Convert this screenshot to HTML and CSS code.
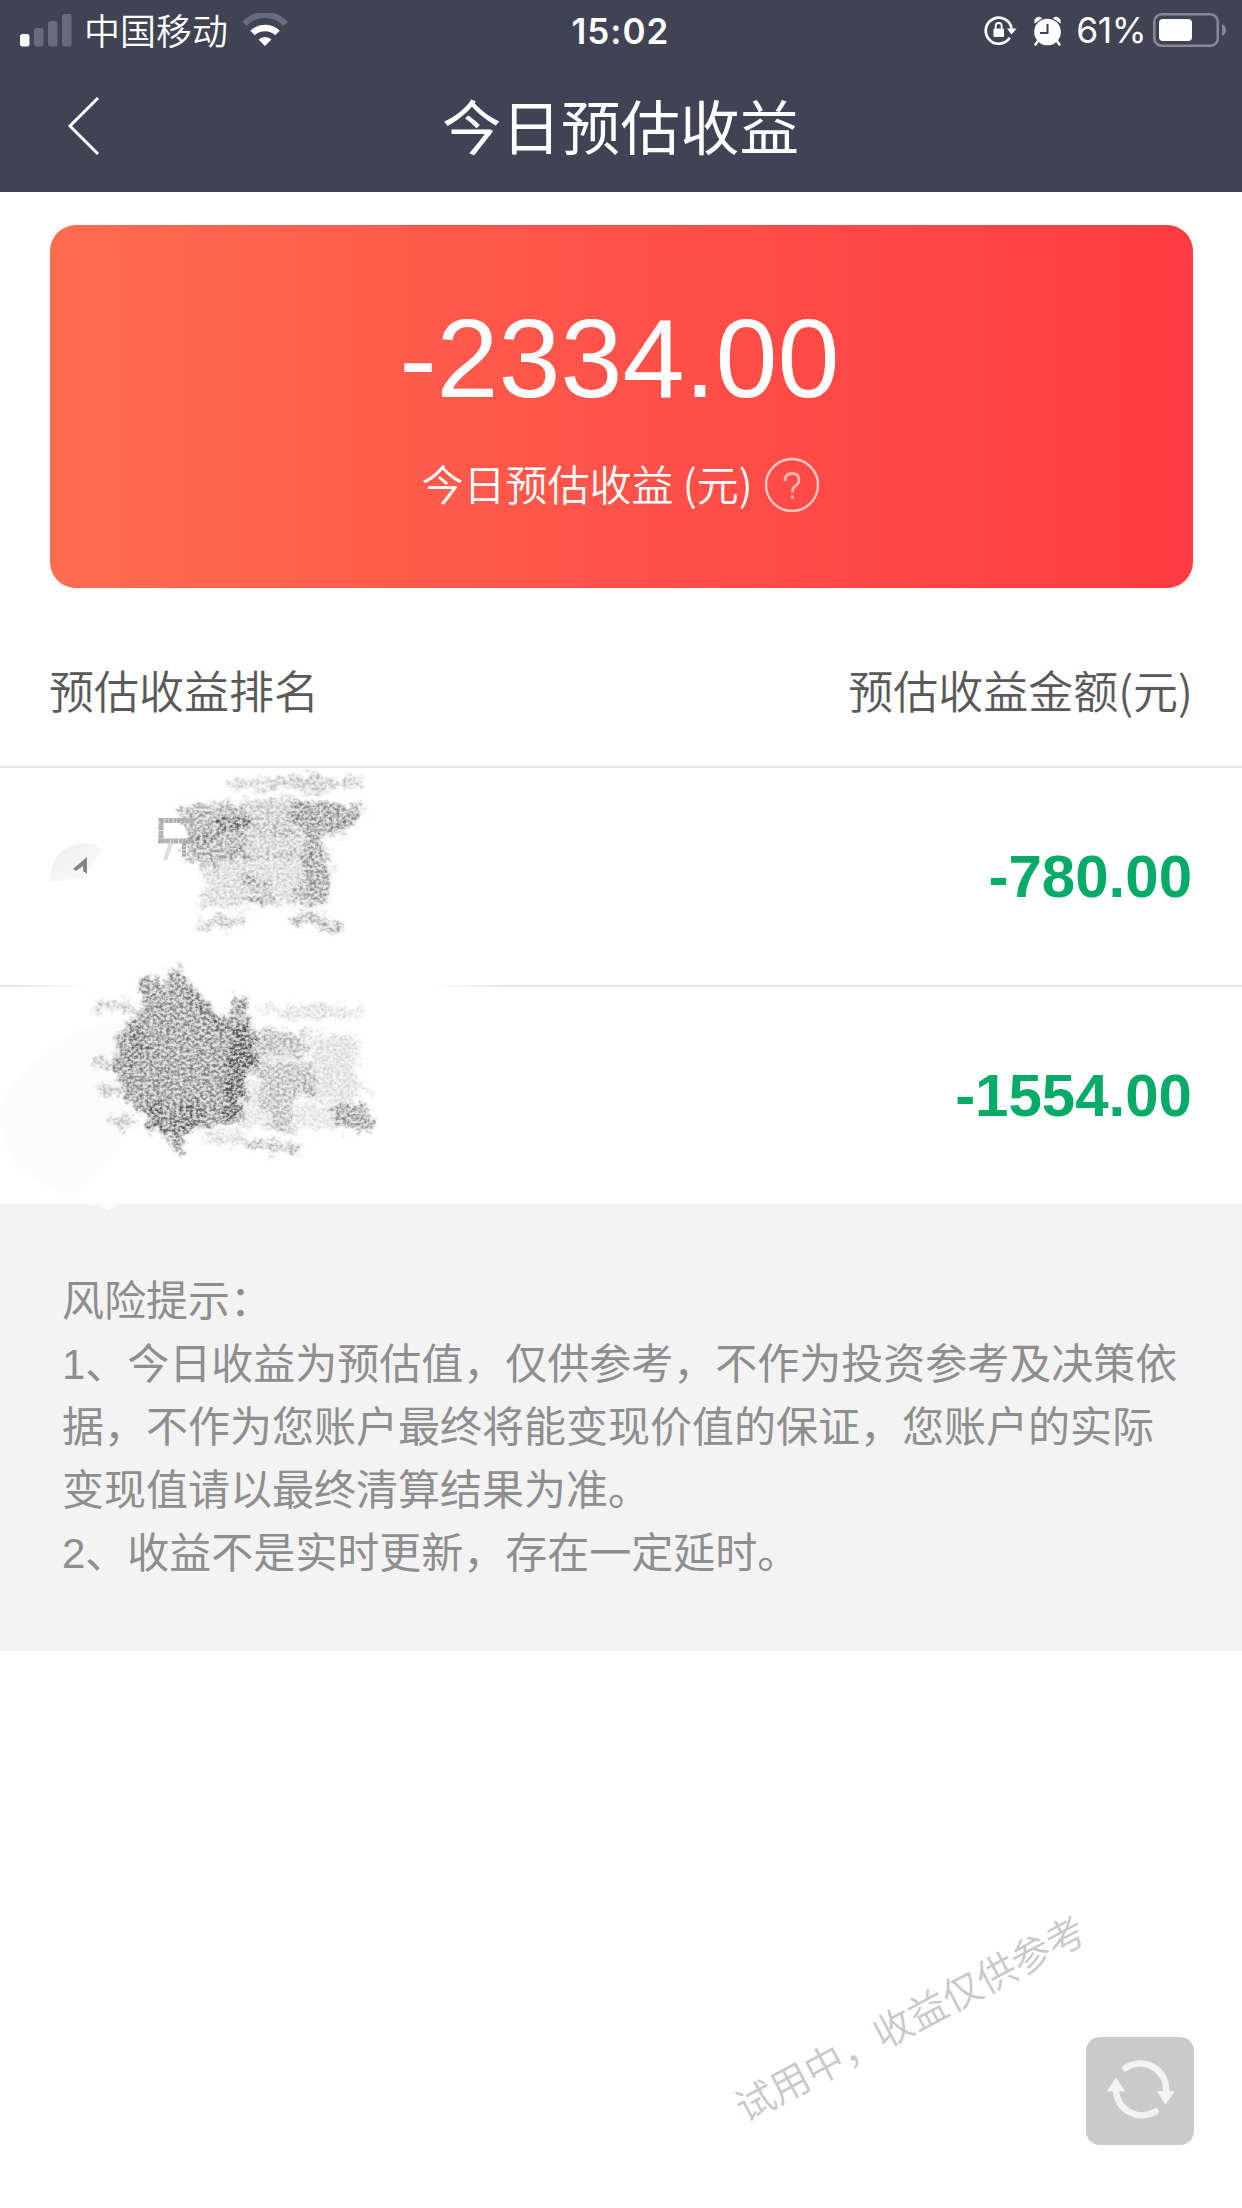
FILE: index.html
```html
<!DOCTYPE html>
<html lang="zh-CN">
<head>
<meta charset="utf-8">
<title>今日预估收益</title>
<link rel="stylesheet" href="styles.css">
</head>
<body>
<header class="top">
  <div class="status">
    <div class="status-left">
      <svg class="signal" viewBox="0 0 52 34" width="52" height="34"><rect x="0" y="20" width="9.500" height="12.500" rx="2.500" fill="#fff"/><g fill="#686b79"><rect x="14" y="14" width="9.500" height="18.500" rx="2.500"/><rect x="28" y="7" width="9.500" height="25.500" rx="2.500"/><rect x="42" y="0" width="9.500" height="32.500" rx="2.500"/></g></svg>
      <span class="carrier">中国移动</span>
      <svg class="wifi" viewBox="0 0 46 34" width="46" height="34" fill="none"><path d="M2.200 10.800A29 29 0 0 1 43.800 10.800" stroke="#686b79" stroke-width="6"/><path d="M10.500 20A18 18 0 0 1 35.500 20" stroke="#fff" stroke-width="6.500"/><path d="M16.500 26.500A9.500 9.500 0 0 1 29.500 26.500L23 33Z" fill="#fff"/></svg>
    </div>
    <span class="time">15:02</span>
    <div class="status-right">
      <svg class="lock" viewBox="0 0 34 32" width="34" height="32"><path d="M25.700 22.800A13 13 0 1 1 27.600 13.500" fill="none" stroke="#fff" stroke-width="2.700"/><path d="M23 13.500H32.500L27.500 19.500Z" fill="#fff"/><rect x="9.500" y="13.500" width="10.500" height="8.500" rx="1" fill="#fff"/><path d="M11.700 14V11a3 3 0 0 1 6 0v3" fill="none" stroke="#fff" stroke-width="1.800"/></svg>
      <svg class="alarm" viewBox="0 0 30 32" width="30" height="32"><circle cx="14.500" cy="17" r="13.300" fill="#fff"/><path d="M5 26L2.500 29.500M24 26l2.500 3.500" stroke="#fff" stroke-width="2.500" stroke-linecap="round"/><path d="M1.500 8.500Q.5 3.500 4.500 2Q7.500 1 9 3.500ZM27.500 8.500Q28.500 3.500 24.500 2Q21.500 1 20 3.500Z" fill="#fff"/><path d="M14.500 9V18H7" fill="none" stroke="#3f4353" stroke-width="2"/></svg>
      <span class="percent">61%</span>
      <svg class="battery" viewBox="0 0 74 36" width="74" height="36"><rect x="1.300" y="1.300" width="63.500" height="31.500" rx="7.500" fill="none" stroke="#868995" stroke-width="2.600"/><rect x="6" y="6" width="33" height="22" rx="4" fill="#fff"/><path d="M69 11Q73 13 73 17T69 23Z" fill="#868995"/></svg>
    </div>
  </div>
  <div class="nav">
    <svg class="back" viewBox="0 0 34 62" width="34" height="62"><path d="M31 3L3 31L31 59" fill="none" stroke="#fff" stroke-width="3"/></svg>
    <h1 class="title">今日预估收益</h1>
  </div>
</header>

<main>
  <section class="card">
    <div class="total">-2334.00</div>
    <div class="caption"><span class="caption-text">今日预估收益 (元)</span><svg class="help" viewBox="0 0 56 56" width="56" height="56"><circle cx="28" cy="28" r="26" fill="none" stroke="#ffc8c4" stroke-width="2.400"/><path d="M21 24Q21 16.500 28 16.500T35 23Q35 26.500 31.500 29T28.500 35.500M28.500 38.500v3" fill="none" stroke="#ffb8b2" stroke-width="2.800"/></svg></div>
  </section>

  <section class="ranking">
    <div class="heading"><span>预估收益排名</span><span>预估收益金额(元)</span></div>
    <div class="rows">
      <div class="row"><span class="amount">-780.00</span></div>
      <div class="row"><span class="amount">-1554.00</span></div>
      <svg class="scribble" viewBox="0 768 520 462" width="520" height="462">
        <defs>
          <filter id="pencil" filterUnits="userSpaceOnUse" x="0" y="768" width="520" height="462" color-interpolation-filters="sRGB">
            <feTurbulence type="fractalNoise" baseFrequency=".09" numOctaves="3" seed="4" result="wave"/>
            <feGaussianBlur in="SourceGraphic" stdDeviation="2.200" result="soft"/>
            <feDisplacementMap in="soft" in2="wave" scale="20" xChannelSelector="R" yChannelSelector="G" result="shape"/>
            <feTurbulence type="fractalNoise" baseFrequency=".3 .34" numOctaves="3" seed="11"/>
            <feColorMatrix values="0 0 0 0 0  0 0 0 0 0  0 0 0 0 0  2.600 0 0 0 -.9" result="grain"/>
            <feComposite in="shape" in2="grain" operator="arithmetic" k1="1.100" k2=".32" k3="0" k4="0"/>
            <feColorMatrix values="0 0 0 0 .34  0 0 0 0 .34  0 0 0 0 .34  0 0 0 1 0"/>
          </filter>
          <linearGradient id="fade"><stop offset="0" stop-color="#fefefe" stop-opacity="0"/><stop offset=".15" stop-color="#fefefe"/><stop offset=".85" stop-color="#fefefe"/><stop offset="1" stop-color="#fefefe" stop-opacity="0"/></linearGradient>
          <linearGradient id="badge" x1="0" y1="0" x2="1" y2="1"><stop offset="0" stop-color="#ededed"/><stop offset="1" stop-color="#fefefe"/></linearGradient>
        </defs>
        <rect x="10" y="983" width="500" height="7" fill="url(#fade)"/>
        <path d="M50 882Q49 848 83 843Q96 843 102 851L84 878Z" fill="url(#badge)"/>
        <path d="M73 869L87 857V874L83 871V866L76 871Z" fill="#858585"/>
        <path d="M78 1030Q20 1065 0 1104Q0 1150 22 1170L70 1200L120 1150V1020Z" fill="#fcfcfc"/>
        <path d="M80 1203L88 1206L98 1204L108 1211L120 1203Z" fill="#fcfcfc"/>
        <g filter="url(#pencil)">
          <path d="M232 782L318 773L333 780L360 777L358 786L325 791L230 787Z" opacity=".28"/>
          <path d="M196 860L330 850L332 880L318 905L197 908L208 890Z" opacity=".2"/>
          <path d="M198 920L245 912L248 925L198 930Z" opacity=".28"/>
          <path d="M238 898L270 894L268 903L238 903Z" opacity=".4"/>
          <path d="M174 807L230 803L244 800L246 828L190 845Z" opacity=".42"/>
          <path d="M244 801L292 798L300 838L246 830Z" opacity=".28"/>
          <path d="M292 800L365 808L345 833L312 836L290 822Z" opacity=".52"/>
          <path d="M190 838L245 828L250 859L198 864L182 853Z" opacity=".42"/>
          <path d="M246 828L296 832L305 858L250 858Z" opacity=".24"/>
          <path d="M302 833L323 836L323 858L304 862Z" opacity=".48"/>
          <path d="M306 862L330 861L326 905L297 899Z" opacity=".38"/>
          <path d="M291 914L317 912L346 930L328 934L310 921L292 924Z" opacity=".42"/>
          <path d="M215 822L252 820L248 829L215 829ZM271 819L281 820L276 824Z" opacity=".65"/>
          <path d="M240 875L268 880L267 888L240 885ZM230 850L242 843L243 855Z" opacity=".38"/>
          <path d="M139 978L151 975L167 990L169 968L181 970L200 997L227 1021L233 994L246 994L247 1030L260 1059L244 1084L243 1127L210 1125L184 1135L180 1153L162 1135L131 1105L115 1075L118 1035L143 1008Z" opacity=".54"/>
          <path d="M231 1027L245 1025L257 1061L246 1080L240 1117H222Z" opacity=".62"/>
          <path d="M183 987L228 1022L218 1031ZM137 1020L125 1068L130 1073L146 1036ZM143 1106L160 1099L172 1127L181 1104L202 1101L199 1127L180 1138L153 1125Z" opacity=".36"/>
          <g fill="none" stroke="#000" stroke-width="9" opacity=".3"><path d="M94 1006H117M121 1006L136 1012M95 1059L117 1068M98 1087L119 1093M110 1120L134 1121M124 1112V1132M170 1130L182 1152"/></g>
          <path d="M249 1006L327 1005L363 1010L361 1017L285 1018Z" opacity=".16"/>
          <path d="M246 1027L307 1034V1056L250 1056Z" opacity=".36"/>
          <path d="M250 1057L314 1063L313 1092L294 1098L295 1135L270 1127L262 1095Z" opacity=".34"/>
          <path d="M245 1080L262 1090L272 1127L245 1127Z" opacity=".14"/>
          <path d="M308 1032L360 1038L354 1070L369 1090L348 1103L295 1098L315 1065Z" opacity=".17"/>
          <path d="M330 1105L364 1105L373 1120L371 1130L338 1129Z" opacity=".5"/>
          <path d="M295 1105L333 1104L338 1128L295 1127Z" opacity=".14"/>
          <path d="M204 1131L245 1134L250 1145L205 1143Z" opacity=".2"/>
          <path d="M245 1140L300 1144L301 1153L245 1148Z" opacity=".36"/>
        </g>
        <path d="M164 825H184L188 838H164Z" fill="#fff"/>
        <path d="M160.500 820.500H194M161 818V843M158 841H192" fill="none" stroke="#b0b0b0" stroke-width="5" stroke-dasharray="4 .7 3 .4"/>
        <path d="M171 843L165 860" stroke="#ddd" stroke-width="4"/>
        <path d="M184 843V857" stroke="#aaa" stroke-width="4" stroke-dasharray="3 .6"/>
      </svg>
    </div>
  </section>

  <section class="notice">
    <p>风险提示：</p>
    <p>1、今日收益为预估值，仅供参考，不作为投资参考及决策依<br>据，不作为您账户最终将能变现价值的保证，您账户的实际<br>变现值请以最终清算结果为准。</p>
    <p>2、收益不是实时更新，存在一定延时。</p>
  </section>
</main>

<div class="watermark">试用中，收益仅供参考</div>
<div class="refresh">
  <svg viewBox="0 0 108 108" width="108" height="108"><g fill="none" stroke="#f3f3f3" stroke-width="6.500" stroke-linecap="round"><path d="M39.500 31A26 26 0 0 1 80 55"/><path d="M69.500 74.500A26 26 0 0 1 30 54"/></g><path d="M71.500 54.500H88L79.500 67ZM21.500 54H38.500L30 41Z" fill="#f3f3f3" stroke="#f3f3f3" stroke-linejoin="round"/></svg>
</div>
</body>
</html>
```
FILE: styles.css
```css
* { box-sizing: border-box; }

body {
  position: relative;
  margin: 0;
  width: 1242px;
  height: 2208px;
  overflow: hidden;
  background: #fefefe;
  color: #595959;
  font-family: "Liberation Sans", "Noto Sans CJK SC", sans-serif;
  font-weight: 350;
}

svg { display: block; flex: none; }

.top {
  height: 192px;
  background: #3f4353;
  color: #fff;
}

.status {
  display: grid;
  grid-template-columns: 1fr auto 1fr;
  align-items: center;
  height: 62px;
  padding: 0 17px 0 20px;
}

.status-left,
.status-right {
  display: flex;
  align-items: center;
}

.status-right { margin-right: -2px; justify-content: flex-end; }

.carrier {
  margin: -3px 0 0 12px;
  font-family: "Noto Sans CJK SC", sans-serif;
  font-size: 36px;
  line-height: 59px;
}

.wifi { margin-left: 14px; margin-top: -2px; }

.time {
  margin-right: 4px;
  font: 600 35px/62px Inter, sans-serif;
  letter-spacing: 1px;
}

.lock { margin-right: 15px; }
.alarm { margin-right: 13px; }

.percent {
  margin-right: 7px;
  font: 400 35.5px/62px Inter, sans-serif;
  letter-spacing: -0.5px;
}

.nav {
  display: grid;
  grid-template-columns: 120px 1fr 120px;
  align-items: center;
  height: 130px;
}

.back { margin: -3px 0 0 67px; }

.title {
  margin: -5px 0 0 -1px;
  font-family: "Noto Sans CJK SC", sans-serif;
  font-size: 59.5px;
  font-weight: 400;
  line-height: 125px;
  text-align: center;
}

.card {
  height: 363px;
  margin: 33px 49px 0 50px;
  padding-top: 70px;
  border-radius: 26px;
  background: linear-gradient(90deg, #ff6c50, #ff5249 50%, #ff3c42);
  color: #fff;
  text-align: center;
}

.total {
  margin-right: 4px;
  font-size: 111.5px;
  font-weight: 400;
  line-height: 128px;
}

.caption {
  display: flex;
  align-items: center;
  justify-content: center;
  gap: 11px;
  margin: 34px 2px 0 0;
  font-family: "Noto Sans CJK SC", sans-serif;
  font-size: 42px;
  line-height: 56px;
}

.caption-text { margin-top: -4px; }

.heading {
  display: flex;
  align-items: center;
  justify-content: space-between;
  height: 180px;
  padding: 25px 49px 0;
  border-bottom: 2px solid #e8e8e8;
  font-family: "Noto Sans CJK SC", sans-serif;
  font-size: 45px;
}

.rows { position: relative; }

.row {
  display: flex;
  align-items: center;
  justify-content: flex-end;
  height: 217px;
  padding: 0 50px 1px 0;
}

.row + .row {
  height: 219px;
  border-top: 2px solid #e5e5e5;
}

.amount {
  color: #05ab67;
  font-size: 60px;
  font-weight: 700;
}

.scribble {
  position: absolute;
  left: 0;
  top: 0;
}

.notice {
  height: 447px;
  padding: 66px 0 0 62px;
  background: #f3f3f3;
  color: #8e8e8e;
  font-size: 42px;
  font-weight: 400;
  line-height: 63px;
  white-space: nowrap;
}

.notice p { margin: 0; }

.watermark {
  position: absolute;
  left: 711px;
  top: 1990px;
  width: 400px;
  color: #c9c9c9;
  font-size: 39px;
  line-height: 60px;
  text-align: center;
  white-space: nowrap;
  transform: rotate(-28deg);
}

.refresh {
  position: absolute;
  left: 1086px;
  top: 2037px;
  width: 108px;
  height: 108px;
  border-radius: 14px;
  background: #cacaca;
}
```
